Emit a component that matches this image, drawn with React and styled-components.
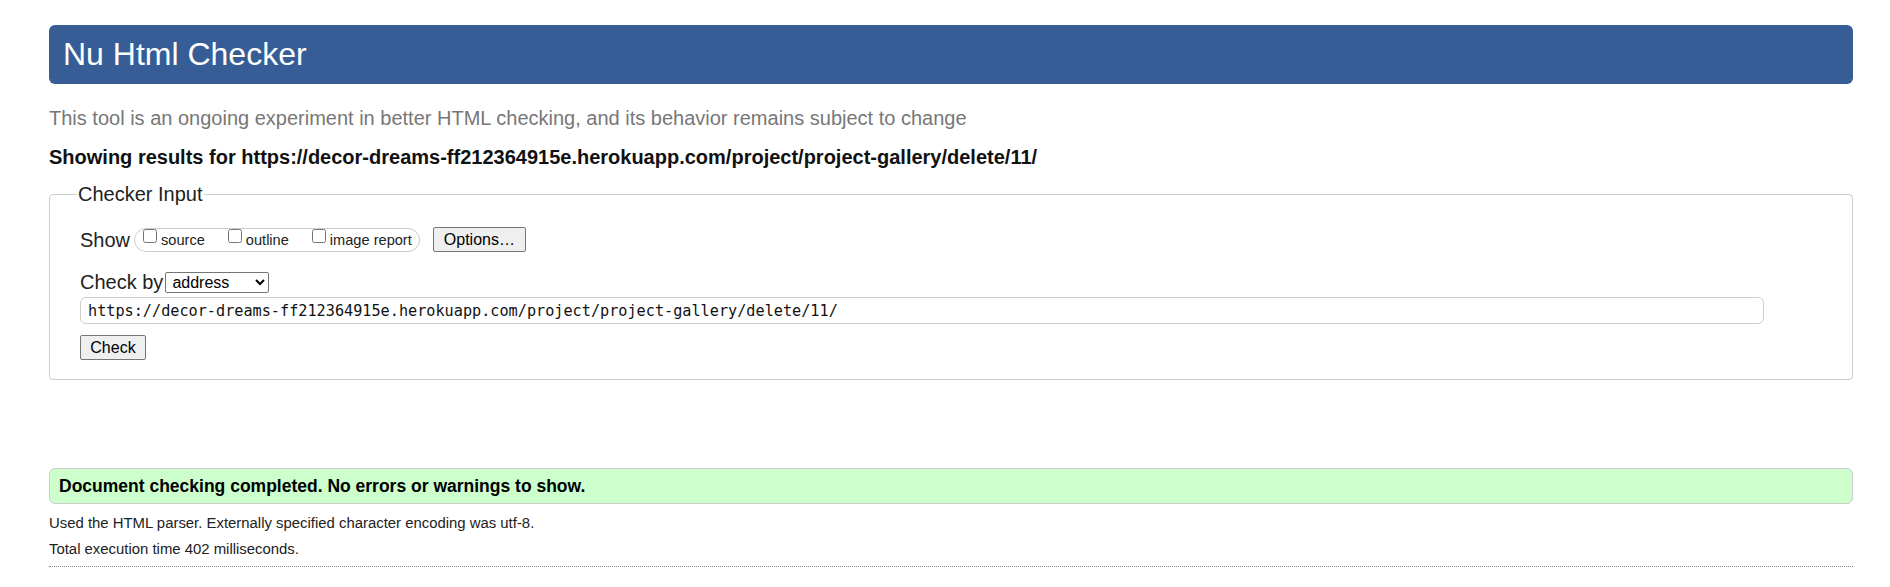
import React from "react";
import styled, { createGlobalStyle } from "styled-components";

const GlobalStyle = createGlobalStyle`
  body {
    margin: 0;
    background: #fff;
    color: #222;
    font-family: "Liberation Sans", Arial, sans-serif;
  }
`;

const Page = styled.div`
  padding: 25px 37px 0 49px;
`;

const Header = styled.h1`
  margin: 0;
  height: 59px;
  display: flex;
  align-items: center;
  padding-left: 14px;
  background: #365d95;
  color: #fff;
  border-radius: 6px;
  font-size: 32px;
  font-weight: normal;
`;

const Intro = styled.p`
  margin: 22px 0 0;
  font-size: 20px;
  line-height: 24px;
  color: #777;
`;

const ResultsFor = styled.p`
  margin: 15px 0 0;
  font-size: 20px;
  line-height: 24px;
  font-weight: bold;
  color: #111;
`;

const Fieldset = styled.fieldset`
  margin: 13px 0 0;
  padding: 21px 0 19px 30px;
  border: 1px solid #ccc;
  border-radius: 4px;
  min-inline-size: 0;
`;

const Legend = styled.legend`
  margin-left: -3px;
  padding: 0 1px;
  font-size: 20px;
  line-height: 24px;
  color: #222;
`;

const Row = styled.div`
  display: flex;
  align-items: center;
  gap: ${(p) => p.$gap || 0}px;
  margin-top: ${(p) => p.$top || 0}px;
`;

const Label = styled.span`
  font-size: 20px;
  line-height: 24px;
`;

const Pill = styled.div`
  display: flex;
  height: 22px;
  padding: 0 7px 0 8px;
  gap: 23px;
  border: 1px solid #ccc;
  border-radius: 12px;
`;

const Option = styled.label`
  display: flex;
  align-items: flex-start;
  font-size: 14.6px;
  line-height: 22px;
  color: #222;
`;

const Box = styled.input`
  width: 14px;
  height: 14px;
  margin: 0 4px 0 0;
`;

const Button = styled.button`
  height: 25px;
  padding: 0 ${(p) => p.$pad || 9}px;
  font-family: "Liberation Sans", Arial, sans-serif;
  font-size: 16px;
  color: #000;
  background: #efefef;
  border: 1px solid #767676;
  border-radius: 2px;
  margin-left: ${(p) => p.$left || 0}px;
`;

const Select = styled.select`
  height: 21px;
  width: 104px;
  padding: 0 2px;
  font-family: "Liberation Sans", Arial, sans-serif;
  font-size: 16px;
  color: #000;
  background: #fff;
  border: 1px solid #767676;
  border-radius: 2px;
`;

const UrlInput = styled.input`
  display: block;
  box-sizing: border-box;
  margin-top: 3px;
  width: 1684px;
  height: 27px;
  padding: 0 7px;
  font-family: "DejaVu Sans Mono", "Liberation Mono", monospace;
  font-size: 15.2px;
  color: #111;
  border: 1px solid #ccc;
  border-radius: 6px;
`;

const Submit = styled(Button)`
  display: block;
  margin-top: 11px;
  width: 66px;
`;

const Success = styled.div`
  margin-top: 88px;
  height: 34px;
  padding-left: 9px;
  border: 1px solid #ccc;
  border-radius: 6px;
  background: #ccffcc;
  font-size: 17.5px;
  font-weight: bold;
  line-height: 34px;
  color: #000;
`;

const Note = styled.p`
  margin: ${(p) => p.$top}px 0 0;
  font-size: 14.9px;
  line-height: 18px;
  color: #222;
`;

const Rule = styled.hr`
  margin: 8px 0 0;
  border: 0;
  border-top: 1px dotted #888;
`;

const url =
  "https://decor-dreams-ff212364915e.herokuapp.com/project/project-gallery/delete/11/";

export default function App() {
  return (
    <Page>
      <GlobalStyle />
      <Header>Nu Html Checker</Header>
      <Intro>
        This tool is an ongoing experiment in better HTML checking, and its
        behavior remains subject to change
      </Intro>
      <ResultsFor>Showing results for {url}</ResultsFor>
      <Fieldset>
        <Legend>Checker Input</Legend>
        <Row $gap={4}>
          <Label>Show</Label>
          <Pill>
            <Option>
              <Box type="checkbox" />
              source
            </Option>
            <Option>
              <Box type="checkbox" />
              outline
            </Option>
            <Option>
              <Box type="checkbox" />
              image report
            </Option>
          </Pill>
          <Button $left={9} $pad={10}>Options…</Button>
        </Row>
        <Row $top={18} $gap={2}>
          <Label>Check by</Label>
          <Select defaultValue="address">
            <option value="address">address</option>
            <option value="file">file upload</option>
            <option value="text">text input</option>
          </Select>
        </Row>
        <UrlInput type="url" defaultValue={url} />
        <Submit>Check</Submit>
      </Fieldset>
      <Success>Document checking completed. No errors or warnings to show.</Success>
      <Note $top={10}>
        Used the HTML parser. Externally specified character encoding was utf-8.
      </Note>
      <Note $top={8}>Total execution time 402 milliseconds.</Note>
      <Rule />
    </Page>
  );
}
